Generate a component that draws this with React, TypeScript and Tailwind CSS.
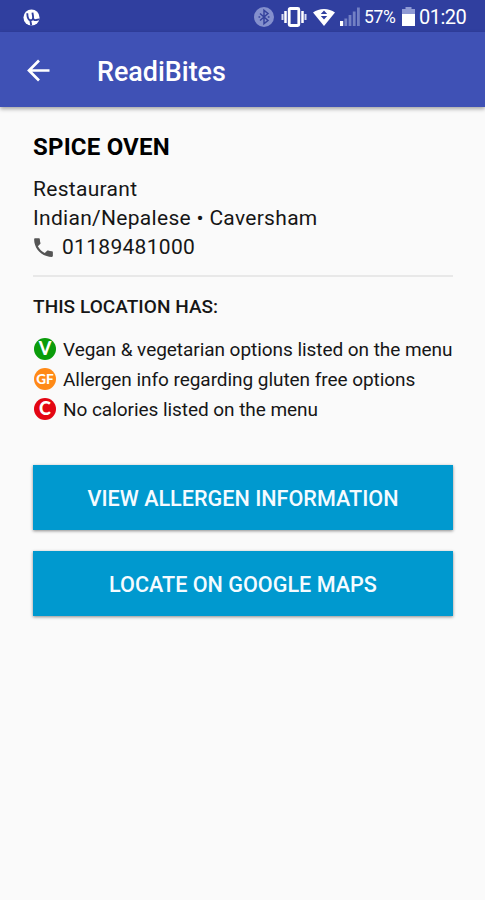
import type { ReactNode } from "react";

function StatusBar() {
  return (
    <div className="flex h-8 items-center bg-[#303f9f] pt-[2px] text-white">
      <svg className="ml-[23px] h-[17px] w-[17px]" viewBox="0 0 18 18">
        <circle cx="9" cy="9" r="8.500" fill="#fff" />
        <path d="M4.500 4.500c.2 5 .8 7.400 3.500 7.400 2.400 0 3-1.800 2.600-4.400L10 3.800M10.600 9.500c.4 2 1.800 2.500 3.400 2.100L17 11M7.800 12.200l.9 5.200" fill="none" stroke="#303f9f" strokeWidth="2" />
      </svg>
      <svg className="ml-[214px] h-5 w-5" viewBox="0 0 20 20">
        <circle cx="10" cy="10" r="10" fill="#8490cd" />
        <path d="M6 6.500l8 7-4 3.200V3.300l4 3.200-8 7" fill="none" stroke="#35429c" strokeWidth="1.500" />
        <path d="M4.500 10h1.700M13.800 10h1.700" stroke="#35429c" strokeWidth="1.500" />
      </svg>
      <svg className="ml-[7px] h-5 w-[26px]" viewBox="0 0 26 20">
        <rect x="8.200" y="1.500" width="9.600" height="17" rx="1" fill="#303f9f" stroke="#fff" strokeWidth="2.800" />
        <path d="M4.500 4v12M21.500 4v12" stroke="#fff" strokeWidth="2.500" />
        <path d="M1.500 7v6M24.500 7v6" stroke="#d8dcf2" strokeWidth="2" />
      </svg>
      <svg className="ml-[5px] h-5 w-6" viewBox="0 0 24 20">
        <path d="M1 5.500C7 .7 17 .7 23 5.500L12 19z" fill="#fff" />
        <path d="M8.800 7l3.200-3.500L15.200 7zM8.800 9h6.400L12 12.500z" fill="#303f9f" />
      </svg>
      <svg className="ml-[4px] h-5 w-5" viewBox="0 0 20 20">
        <path d="M0 14h3.200v5H0z" fill="#fff" />
        <path d="M4.400 11.500h2.800V19H4.400zM8.600 8h2.800v11H8.600zM12.800 4.500h2.800V19h-2.800zM17 .5h2.800V19H17z" fill="#7380c4" />
      </svg>
      <span className="ml-[4px] w-[36px] whitespace-nowrap text-[17.500px] leading-[30px] tracking-[-0.300px]">57%</span>
      <svg className="ml-[2px] h-5 w-[13px]" viewBox="0 0 13 20">
        <path d="M3.500 0h6v2H13v5H0V2h3.500z" fill="#8f9ad4" />
        <path d="M0 7h13v12H0z" fill="#fff" />
      </svg>
      <span className="ml-[4px] whitespace-nowrap text-[20px] leading-[30px] tracking-[-0.500px]">01:20</span>
    </div>
  );
}

function Badge({ color, children }: { color: string; children: ReactNode }) {
  return (
    <svg className="h-[22px] w-[22px] shrink-0" viewBox="0 0 22 22">
      <circle cx="11" cy="11" r="11" fill={color} />
      {children}
    </svg>
  );
}

function Feature({ badge, text }: { badge: ReactNode; text: string }) {
  return (
    <li className="flex h-[30px] items-center gap-[7px] whitespace-nowrap text-[19px] tracking-[-0.050px]">
      {badge}
      <span className="pt-[3px]">{text}</span>
    </li>
  );
}

function ActionButton({ label }: { label: string }) {
  return (
    <button className="flex h-[65px] w-full items-center justify-center bg-[#0099cf] pt-[3px] text-[21.600px] font-medium whitespace-nowrap text-[#f5fbff] shadow-[0_1px_3px_rgba(0,0,0,0.45)]">
      {label}
    </button>
  );
}

export default function App() {
  return (
    <div className="h-[900px] w-[485px] overflow-hidden bg-[#fafafa] font-['Roboto',sans-serif] text-[#161616]">
      <StatusBar />
      <header className="flex h-[75px] items-center bg-[#3f51b5] text-white shadow-[0_2px_4px_rgba(0,0,0,0.35)]">
        <svg className="ml-[27px] h-6 w-[23px]" viewBox="0 0 23 24">
          <path d="M12 2.500L2 12.500l10 10M2 12.500h20.500" fill="none" stroke="#fff" strokeWidth="2.700" />
        </svg>
        <h1 className="ml-[47px] pt-[6px] text-[26.900px] font-medium">ReadiBites</h1>
      </header>
      <main className="ml-[33px] w-[420px] pt-[25px]">
        <h2 className="text-[24px] leading-[30px] font-bold tracking-[0.200px] text-black">SPICE OVEN</h2>
        <div className="mt-[13px] text-[21px] leading-[29px] tracking-[0.300px] whitespace-nowrap">
          <p>Restaurant</p>
          <p>Indian/Nepalese • Caversham</p>
          <p className="flex items-center">
            <svg className="-ml-[2px] mr-[6px] h-[25px] w-[25px]" viewBox="0 0 24 24">
              <path d="M6.620 10.790c1.440 2.830 3.760 5.140 6.590 6.590l2.200-2.200c.27-.27.670-.36 1.020-.24 1.120.37 2.330.57 3.570.57.550 0 1 .45 1 1V20c0 .55-.45 1-1 1C10.610 21 3 13.390 3 4c0-.55.450-1 1-1h3.500c.55 0 1 .45 1 1 0 1.250.2 2.450.57 3.570.110.350.030.740-.25 1.020z" fill="#555" />
            </svg>
            01189481000
          </p>
        </div>
        <hr className="mt-[13px] border-t-2 border-[#e8e8e8]" />
        <h3 className="mt-[16px] text-[19px] leading-7 font-medium whitespace-nowrap tracking-[0.050px]">THIS LOCATION HAS:</h3>
        <ul className="mt-[13px] ml-px">
          <Feature
            badge={
              <Badge color="#0b9c0b">
                <text x="11" y="17.300" textAnchor="middle" fontSize="18" fontWeight="900" fill="#fff" className="font-['Lato',sans-serif]">V</text>
              </Badge>
            }
            text="Vegan &amp; vegetarian options listed on the menu"
          />
          <Feature
            badge={
              <Badge color="#ff8a16">
                <text x="11" y="15.700" textAnchor="middle" fontSize="13.500" fontWeight="900" fill="#fff" className="font-['Lato',sans-serif]">GF</text>
              </Badge>
            }
            text="Allergen info regarding gluten free options"
          />
          <Feature
            badge={
              <Badge color="#e30613">
                <text x="10.800" y="17.300" textAnchor="middle" fontSize="18" fontWeight="900" fill="#fff" className="font-['Lato',sans-serif]">C</text>
              </Badge>
            }
            text="No calories listed on the menu"
          />
        </ul>
        <div className="mt-[41px] flex flex-col gap-[21px]">
          <ActionButton label="VIEW ALLERGEN INFORMATION" />
          <ActionButton label="LOCATE ON GOOGLE MAPS" />
        </div>
      </main>
    </div>
  );
}
